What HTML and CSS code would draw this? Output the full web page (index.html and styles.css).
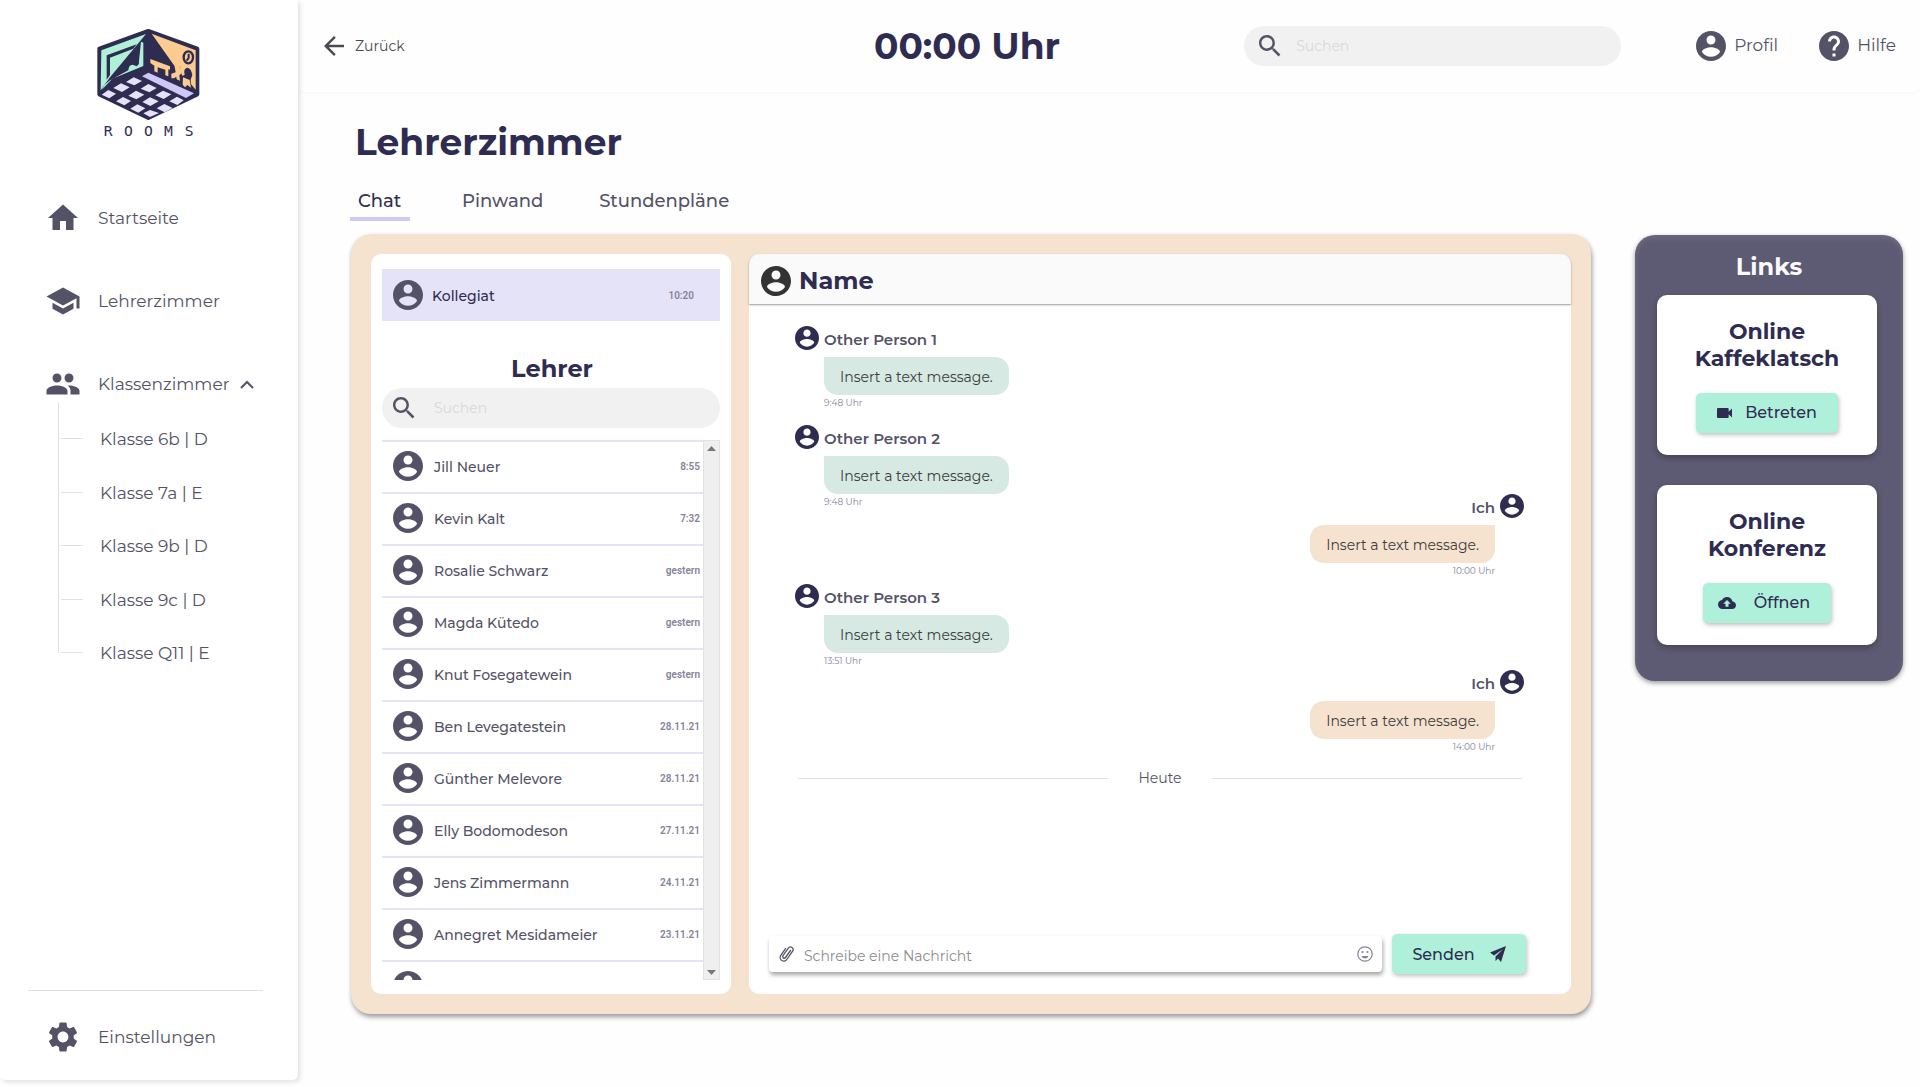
FILE: index.html
```html
<!DOCTYPE html>
<html lang="de">
<head>
<meta charset="utf-8">
<meta name="viewport" content="width=device-width, initial-scale=1">
<title>Rooms – Lehrerzimmer</title>
<link rel="stylesheet" href="styles.css">
</head>
<body>
<svg class="sprite" aria-hidden="true">
  <symbol id="account" viewBox="2 2 20 20"><path d="M12 2C6.48 2 2 6.48 2 12s4.480 10 10 10 10-4.480 10-10S17.520 2 12 2zm0 3c1.660 0 3 1.340 3 3s-1.340 3-3 3-3-1.340-3-3 1.340-3 3-3zm0 14.200c-2.500 0-4.710-1.280-6-3.220.030-1.990 4-3.080 6-3.080 1.990 0 5.970 1.090 6 3.080-1.290 1.940-3.500 3.220-6 3.220z"/></symbol>
  <symbol id="search" viewBox="3 3 18 18"><path d="M15.500 14h-.790l-.280-.270C15.410 12.590 16 11.110 16 9.500 16 5.910 13.090 3 9.500 3S3 5.910 3 9.500 5.910 16 9.500 16c1.610 0 3.090-.590 4.230-1.570l.270.280v.790l5 4.990L20.490 19l-4.990-5zm-6 0C7.010 14 5 11.990 5 9.500S7.010 5 9.500 5 14 7.010 14 9.500 11.990 14 9.500 14z"/></symbol>
</svg>
<div class="app">
  <aside class="sidebar">
    <a class="logo" href="#" aria-label="Rooms">
      <svg viewBox="0 0 420 405" width="140" height="135">
        <path d="M205 48 352 101V238L205 309 58 238V101Z" fill="#2f2c52" stroke="#2f2c52" stroke-width="12" stroke-linejoin="round"/>
        <path d="M64 106 198 57 90 187 62 226Z" fill="#aff0d8"/>
        <path d="M80 121 170 88 160 101 90 128V180L80 194Z" fill="#2f2c52"/>
        <path d="M183 80 190 83V153L97 191 64 226 74 209 90 196 145 166Q146 150 158 149L170 154 176 148Z" fill="#aff0d8"/>
        <path d="M94 187 161 106 176 90V146L171 150 158 147 146 151 144 164Z" fill="#2f2c52"/>
        <path d="M215 56 347 106V224L333 207 332 194 337 180Q333 158 321 158 309 162 314 180L306 182 300 154 283 152Z" fill="#fccb8f"/>
        <path d="M211 132 270 154V164L265 163V184L256 181V164L233 157V173L223 169V152L211 144Z" fill="#fccb8f"/>
        <path d="M283 150 300 154 306 174 298 181 300 197 290 193 289 185 282 190 274 190V176L287 172Z" fill="#fccb8f"/>
        <path d="M309 187 329 195 333 218 322 210 315 217 308 209Z" fill="#fccb8f"/>
        <ellipse cx="325" cy="127" rx="14" ry="18" fill="none" stroke="#2f2c52" stroke-width="7"/>
        <path d="M326 116V129L320 137" fill="none" stroke="#2f2c52" stroke-width="6"/>
        <path d="M205 173 342 235 318 249 186 184Z" fill="#cdc8f5"/>
        <g fill="#e5e2f8">
          <path d="M161 187 186 198 163 211 138 201ZM123 205 149 217 126 231 100 219ZM85 225 108 236 88 250 65 239Z"/>
          <path d="M205 207 230 219 208 232 182 221ZM168 227 193 239 169 253 145 242ZM129 246 153 258 133 271 108 259Z"/>
          <path d="M249 227 274 238 251 252 226 241ZM210 247 236 259 211 273 187 261ZM172 268 196 280 175 293 151 281Z"/>
          <path d="M291 245 311 256 292 270 268 259ZM253 267 278 279 254 292 230 280ZM210 285 237 294 210 306 190 295Z"/>
        </g>
        <text class="logo-name" x="71 132 192 252 314" y="364">ROOMS</text>
      </svg>
    </a>
    <nav class="nav" aria-label="Hauptnavigation">
      <a class="nav-item" href="#"><svg class="nav-icon" viewBox="0 0 24 24"><path d="M10 20v-6h4v6h5v-8h3L12 3 2 12h3v8z"/></svg><span>Startseite</span></a>
      <a class="nav-item" href="#"><svg class="nav-icon" viewBox="0 0 24 24"><path d="M5 13.180v4L12 21l7-3.820v-4L12 17l-7-3.820zM12 3 1 9l11 6 9-4.910V17h2V9L12 3z"/></svg><span>Lehrerzimmer</span></a>
      <a class="nav-item" href="#"><svg class="nav-icon" viewBox="0 0 24 24"><path d="M16 11c1.660 0 2.990-1.340 2.990-3S17.660 5 16 5c-1.660 0-3 1.340-3 3s1.340 3 3 3zm-8 0c1.660 0 2.990-1.340 2.990-3S9.660 5 8 5C6.340 5 5 6.340 5 8s1.340 3 3 3zm0 2c-2.330 0-7 1.170-7 3.500V19h14v-2.500c0-2.330-4.670-3.500-7-3.500zm8 0c-.290 0-.620.020-.970.050 1.160.840 1.970 1.970 1.970 3.450V19h6v-2.500c0-2.330-4.670-3.500-7-3.500z"/></svg><span>Klassenzimmer</span><svg class="chevron" viewBox="0 0 14 9"><path d="M1 8 7 2l6 6" fill="none" stroke="currentColor" stroke-width="2"/></svg></a>
      <ul class="tree">
        <li><a href="#">Klasse 6b | D</a></li>
        <li><a href="#">Klasse 7a | E</a></li>
        <li><a href="#">Klasse 9b | D</a></li>
        <li><a href="#">Klasse 9c | D</a></li>
        <li><a href="#">Klasse Q11 | E</a></li>
      </ul>
    </nav>
    <div class="sidebar-foot">
      <a class="nav-item" href="#"><svg class="nav-icon" viewBox="0 0 24 24"><path d="M19.140 12.940c.040-.300.060-.610.060-.940 0-.320-.020-.640-.070-.940l2.030-1.580c.180-.140.230-.410.120-.610l-1.920-3.320c-.120-.220-.370-.290-.590-.220l-2.390.960c-.500-.380-1.030-.700-1.620-.940L14.400 2.810c-.040-.240-.240-.410-.480-.410h-3.840c-.240 0-.430.170-.470.410L9.250 5.350c-.590.240-1.130.570-1.620.940l-2.390-.960c-.220-.080-.470 0-.590.220L2.740 8.870c-.120.210-.080.470.120.610l2.030 1.580c-.050.300-.090.630-.090.940s.020.640.070.940l-2.030 1.580c-.180.140-.230.410-.120.610l1.920 3.320c.120.220.370.290.590.220l2.390-.960c.500.380 1.030.700 1.620.940l.360 2.540c.050.240.240.410.480.410h3.840c.240 0 .440-.170.470-.410l.360-2.540c.590-.240 1.130-.560 1.620-.940l2.390.960c.220.080.470 0 .590-.220l1.920-3.320c.120-.220.070-.470-.120-.610l-2.010-1.580zM12 15.600c-1.980 0-3.600-1.620-3.600-3.600s1.620-3.600 3.600-3.600 3.600 1.620 3.600 3.600-1.620 3.600-3.600 3.600z"/></svg><span>Einstellungen</span></a>
    </div>
  </aside>

  <div class="page">
    <header class="topbar">
      <a class="back" href="#"><svg viewBox="4 4 16 16" width="20" height="20"><path d="M20 11H7.830l5.590-5.590L12 4l-8 8 8 8 1.410-1.410L7.830 13H20v-2z"/></svg><span>Zurück</span></a>
      <time class="clock">00:00 Uhr</time>
      <div class="tools">
        <label class="search"><svg class="search-icon"><use href="#search"/></svg><input type="search" placeholder="Suchen" aria-label="Suchen"></label>
        <a class="tool" href="#"><svg class="avatar"><use href="#account"/></svg><span>Profil</span></a>
        <a class="tool" href="#"><svg class="avatar" viewBox="2 2 20 20"><path d="M12 2C6.480 2 2 6.480 2 12s4.480 10 10 10 10-4.480 10-10S17.520 2 12 2zm1 17h-2v-2h2v2zm2.070-7.750-.900.920C13.450 12.900 13 13.500 13 15h-2v-.500c0-1.100.450-2.100 1.170-2.830l1.240-1.260c.370-.360.590-.860.590-1.410 0-1.100-.900-2-2-2s-2 .900-2 2H8c0-2.210 1.790-4 4-4s4 1.790 4 4c0 .880-.360 1.680-.930 2.250z"/></svg><span>Hilfe</span></a>
      </div>
    </header>

    <main class="content">
      <h1>Lehrerzimmer</h1>
      <nav class="tabs" aria-label="Bereiche">
        <a class="tab active" href="#">Chat</a>
        <a class="tab" href="#">Pinwand</a>
        <a class="tab" href="#">Stundenpläne</a>
      </nav>
      <div class="columns">
        <section class="messenger">
          <div class="contacts">
            <a class="contact selected" href="#"><svg class="avatar"><use href="#account"/></svg><span class="contact-name">Kollegiat</span><time>10:20</time></a>
            <h2>Lehrer</h2>
            <label class="search"><svg class="search-icon"><use href="#search"/></svg><input type="search" placeholder="Suchen" aria-label="Lehrer suchen"></label>
            <div class="contact-box">
              <ul class="contact-list">
                <li><a class="contact" href="#"><svg class="avatar"><use href="#account"/></svg><span class="contact-name">Jill Neuer</span><time>8:55</time></a></li>
                <li><a class="contact" href="#"><svg class="avatar"><use href="#account"/></svg><span class="contact-name">Kevin Kalt</span><time>7:32</time></a></li>
                <li><a class="contact" href="#"><svg class="avatar"><use href="#account"/></svg><span class="contact-name">Rosalie Schwarz</span><time>gestern</time></a></li>
                <li><a class="contact" href="#"><svg class="avatar"><use href="#account"/></svg><span class="contact-name">Magda Kütedo</span><time>gestern</time></a></li>
                <li><a class="contact" href="#"><svg class="avatar"><use href="#account"/></svg><span class="contact-name">Knut Fosegatewein</span><time>gestern</time></a></li>
                <li><a class="contact" href="#"><svg class="avatar"><use href="#account"/></svg><span class="contact-name">Ben Levegatestein</span><time>28.11.21</time></a></li>
                <li><a class="contact" href="#"><svg class="avatar"><use href="#account"/></svg><span class="contact-name">Günther Melevore</span><time>28.11.21</time></a></li>
                <li><a class="contact" href="#"><svg class="avatar"><use href="#account"/></svg><span class="contact-name">Elly Bodomodeson</span><time>27.11.21</time></a></li>
                <li><a class="contact" href="#"><svg class="avatar"><use href="#account"/></svg><span class="contact-name">Jens Zimmermann</span><time>24.11.21</time></a></li>
                <li><a class="contact" href="#"><svg class="avatar"><use href="#account"/></svg><span class="contact-name">Annegret Mesidameier</span><time>23.11.21</time></a></li>
                <li><a class="contact" href="#" aria-label="Weitere"><svg class="avatar"><use href="#account"/></svg></a></li>
              </ul>
              <div class="scrollbar" aria-hidden="true"><svg viewBox="0 0 9 5" width="9" height="5"><path d="M0 5 4.500 0 9 5z"/></svg><svg viewBox="0 0 9 5" width="9" height="5"><path d="M0 0h9L4.500 5z"/></svg></div>
            </div>
          </div>

          <div class="chat">
            <header class="chat-head"><svg class="avatar"><use href="#account"/></svg><h2>Name</h2></header>
            <div class="thread">
              <article class="message"><svg class="face"><use href="#account"/></svg><h3>Other Person 1</h3><p>Insert a text message.</p><time>9:48 Uhr</time></article>
              <article class="message"><svg class="face"><use href="#account"/></svg><h3>Other Person 2</h3><p>Insert a text message.</p><time>9:48 Uhr</time></article>
              <article class="message own"><svg class="face"><use href="#account"/></svg><h3>Ich</h3><p>Insert a text message.</p><time>10:00 Uhr</time></article>
              <article class="message"><svg class="face"><use href="#account"/></svg><h3>Other Person 3</h3><p>Insert a text message.</p><time>13:51 Uhr</time></article>
              <article class="message own"><svg class="face"><use href="#account"/></svg><h3>Ich</h3><p>Insert a text message.</p><time>14:00 Uhr</time></article>
              <div class="day"><span>Heute</span></div>
            </div>
            <form class="composer">
              <div class="field">
                <svg class="clip" viewBox="0 0 16 18"><path d="M11.500 5.500 6.500 12.500a1.500 1.500 0 0 1-2.500-1.800L9.300 3.200a2.600 2.600 0 0 1 4.300 3L7.800 14.500a3.600 3.600 0 0 1-6-4.100L6.500 3.700" fill="none" stroke="currentColor" stroke-width="1.300" stroke-linecap="round"/></svg>
                <input type="text" placeholder="Schreibe eine Nachricht" aria-label="Nachricht">
                <svg class="smiley" viewBox="0 0 16 16"><circle cx="8" cy="8" r="7.200" fill="none" stroke="currentColor" stroke-width="1.200"/><circle cx="5.500" cy="6" r="1.100"/><circle cx="10.500" cy="6" r="1.100"/><path d="M4.500 10h7Q10.500 12.600 8 12.600T4.500 10Z"/></svg>
              </div>
              <button class="btn send" type="button"><span>Senden</span><svg viewBox="0 0 16 16" width="16" height="16"><path d="M16 0 0 6.500 4 9.500 13 3 5.500 10.500V15L8 12.500 11 16z"/></svg></button>
            </form>
          </div>
        </section>

        <aside class="links">
          <h2>Links</h2>
          <div class="card">
            <h3>Online Kaffeklatsch</h3>
            <button class="btn join" type="button"><svg viewBox="3 6 18 12" width="15" height="10"><path d="M17 10.500V7c0-.550-.450-1-1-1H4c-.550 0-1 .450-1 1v10c0 .550.450 1 1 1h12c.550 0 1-.450 1-1v-3.500l4 4v-11l-4 4z"/></svg><span>Betreten</span></button>
          </div>
          <div class="card">
            <h3>Online Konferenz</h3>
            <button class="btn open" type="button"><svg viewBox="0 4 24 16" width="18" height="12"><path d="M19.350 10.040C18.670 6.590 15.640 4 12 4 9.110 4 6.600 5.640 5.350 8.040 2.340 8.360 0 10.910 0 14c0 3.310 2.690 6 6 6h13c2.760 0 5-2.240 5-5 0-2.640-2.050-4.780-4.650-4.960zM14 13v4h-4v-4H7l5-5 5 5h-3z"/></svg><span>Öffnen</span></button>
          </div>
        </aside>
      </div>
    </main>
  </div>
</div>
</body>
</html>
```
FILE: styles.css
```css
:root {
  --ink: #2f2c52;
  --muted: #545266;
  --lilac: #e5e3f8;
  --sand: #f5e3cf;
  --mint: #aff0da;
}

* { box-sizing: border-box; }

body {
  margin: 0;
  background: #fefefe;
  color: var(--muted);
  font-family: Montserrat, Inter, sans-serif;
  font-size: 16px;
}

h1, h2, h3, p, ul { margin: 0; padding: 0; }
ul { list-style: none; }
a { color: inherit; text-decoration: none; }
svg { flex: none; fill: currentColor; }
h1, h2, h3 { color: var(--ink); }
h2 { font-size: 24px; line-height: 30px; }

button, input { font: inherit; color: inherit; border: 0; }
input { flex: 1; min-width: 0; padding: 0; background: none; outline: 0; }

.sprite { position: absolute; width: 0; height: 0; }
.app { display: flex; min-height: 100vh; }

/* Sidebar */
.sidebar {
  display: flex;
  flex-direction: column;
  flex: none;
  width: 298px;
  margin-bottom: 7px;
  padding-top: 15px;
  background: #fff;
  border-radius: 0 0 5px 5px;
  box-shadow: 2px 2px 5px rgba(0, 0, 0, .12);
}
.logo { align-self: center; height: 135px; margin-left: 2px; }
.logo-name {
  font-family: "DejaVu Sans Mono", monospace;
  font-size: 44px;
  fill: var(--ink);
}
.nav { display: flex; flex-direction: column; gap: 47px; padding-top: 50px; }
.nav-item { display: flex; align-items: center; height: 36px; padding-left: 45px; font-size: 17px; }
.nav-icon { width: 36px; height: 36px; margin-right: 17px; }
.chevron { width: 14px; height: 9px; margin-left: 11px; }
.tree {
  display: grid;
  grid-template-rows: 36px repeat(4, 1fr);
  height: 250px;
  margin: -46px 0 0 58px;
  border-left: 1px solid #e2e2e6;
}
.tree li { display: flex; align-items: flex-end; }
.tree li::before { content: ""; width: 22px; margin: 0 17px 0 2px; border-bottom: 1px solid #e2e2e6; }
.tree a { height: 0; line-height: 0; font-size: 17px; }
.sidebar-foot { margin: auto 35px 0 28px; padding: 28px 0 25px; border-top: 1px solid #e2e2e6; }
.sidebar-foot .nav-item { padding-left: 17px; }

/* Top bar */
.page { flex: 1; min-width: 0; }
.topbar {
  display: grid;
  grid-template-columns: 1fr auto auto;
  align-items: center;
  height: 92px;
  padding: 0 24px 0 26px;
  border-radius: 0 0 5px 5px;
  box-shadow: 0 1px 2px rgba(0, 0, 0, .03);
}
.back { display: flex; align-items: center; gap: 11px; font-size: 14px; color: #4b4a50; }
.clock { padding-right: 184px; font-size: 36px; font-weight: 700; color: var(--ink); }
.tools { display: flex; align-items: center; }
.tools .search { width: 377px; margin-right: 75px; }
.tool { display: flex; align-items: center; gap: 8px; font-size: 17px; }
.tool span { padding-bottom: 2px; }
.tool + .tool { margin-left: 41px; }
.avatar { width: 30px; height: 30px; }

.search {
  display: flex;
  align-items: center;
  gap: 19px;
  height: 40px;
  padding: 0 15px 0 11px;
  background: #f1f1f1;
  border-radius: 20px;
}
.search input { font-size: 14px; }
.search input::placeholder { color: #d9d9d9; opacity: 1; }
.search-icon { width: 22px; height: 22px; }
.tools .search { padding-left: 15px; gap: 15px; }

/* Page body */
.content { padding: 28px 17px 73px 53px; }
h1 { padding-left: 4px; font-size: 36px; line-height: 44px; }
.tabs { display: flex; align-items: flex-start; gap: 40px; height: 66px; margin-top: 4px; padding-top: 20px; }
.tab { height: 33px; padding: 0 8px; font-size: 18px; font-weight: 500; line-height: 26px; }
.tab.active { width: 60px; margin: 0 4px 0 -1px; border-bottom: 4px solid #cfcaf6; color: var(--ink); }
.columns { display: flex; align-items: flex-start; gap: 44px; }

/* Messenger */
.messenger {
  display: flex;
  flex: 1;
  gap: 18px;
  min-width: 0;
  padding: 20px;
  background: var(--sand);
  border-radius: 20px;
  box-shadow: 1px 3px 5px rgba(0, 0, 0, .4);
}
.contacts { flex: none; width: 360px; padding: 15px 11px 14px; background: #fff; border-radius: 10px; }
.contacts h2 { margin: 33px 0 4px; padding-left: 2px; text-align: center; }
.contact { display: flex; align-items: center; height: 52px; padding: 0 3px 0 11px; color: var(--muted); font-size: 14px; font-weight: 500; }
.contact-name { flex: 1; padding: 2px 0 0 11px; }
.contact time { padding-top: 2px; font: 600 10px/12px Roboto, sans-serif; color: #85839a; }
.contact.selected { padding-right: 26px; background: var(--lilac); }
.contact.selected .contact-name { padding-left: 9px; color: var(--ink); }
.contact-box { display: flex; height: 540px; margin-top: 12px; overflow: hidden; }
.contact-list { flex: 1; }
.contact-list .contact { padding-bottom: 2px; border-top: 2px solid var(--lilac); }
.scrollbar {
  display: flex;
  flex-direction: column;
  align-items: center;
  justify-content: space-between;
  width: 17px;
  padding: 5px 0 4px;
  background: #efefef;
  border: 1px solid #e2e2e2;
  color: #787878;
}

/* Conversation */
.chat { display: flex; flex: 1; flex-direction: column; min-width: 0; background: #fff; border-radius: 10px; }
.chat-head {
  display: flex;
  align-items: center;
  gap: 8px;
  height: 50px;
  padding: 4px 12px 0;
  background: #fafafa;
  border-radius: 10px 10px 0 0;
  box-shadow: 0 1px 2px rgba(0, 0, 0, .4);
}
.chat-head .avatar { color: #333; }
.thread {
  display: grid;
  flex: 1;
  grid-template-rows: 99px 69px 90px 86px 98px;
  align-content: start;
  padding: 22px 47px 0 46px;
}
.message {
  display: grid;
  grid-template-columns: 24px auto;
  grid-template-rows: 24px 38px 16px;
  row-gap: 7px;
  column-gap: 5px;
  justify-content: start;
  justify-items: start;
}
.face { width: 24px; height: 24px; color: var(--ink); }
.message h3 { padding-top: 4px; font-size: 15px; line-height: 20px; font-weight: 600; color: var(--muted); }
.message p {
  grid-column: 2;
  padding: 2px 16px 0;
  border-radius: 0 14px 14px;
  background: #d6eae3;
  color: #3c3c3c;
  font-size: 14px;
  line-height: 36px;
}
.message time { grid-column: 2; margin-top: -6px; font-size: 9px; line-height: 14px; color: #85839a; }
.own { grid-template-columns: auto 24px; justify-content: end; justify-items: end; }
.own .face { grid-area: 1 / 2; }
.own h3, .own p, .own time { grid-column: 1; }
.own h3 { grid-row: 1; }
.own p { border-radius: 14px 0 14px 14px; background: var(--sand); }
.day { display: flex; align-items: center; gap: 30px; height: 20px; padding: 0 2px 0 3px; font-size: 14px; }
.day::before, .day::after { content: ""; flex: 1; border-top: 1px solid #e2e2e6; }

.composer { display: flex; align-items: center; gap: 10px; padding: 0 45px 20px 20px; }
.field {
  display: flex;
  flex: 1;
  align-items: center;
  gap: 9px;
  min-width: 0;
  height: 36px;
  padding: 0 9px 0 10px;
  background: #fff;
  border-radius: 4px;
  box-shadow: 1px 3px 4px rgba(0, 0, 0, .35);
}
.field input { padding-top: 3px; font-size: 14px; }
.field input::placeholder { color: #8c8c8c; opacity: 1; }
.clip { width: 16px; height: 18px; }
.smiley { width: 16px; height: 16px; color: #85839a; }

.btn {
  display: flex;
  align-items: center;
  justify-content: center;
  height: 40px;
  padding: 0;
  background: var(--mint);
  border-radius: 5px;
  box-shadow: 1px 2px 4px rgba(0, 0, 0, .25);
  color: var(--ink);
  font-size: 16px;
  font-weight: 500;
}
.send { gap: 15px; width: 134px; }

/* Quick links */
.links {
  flex: none;
  width: 268px;
  margin-top: 1px;
  padding: 17px 26px 36px 22px;
  background: #5d5a73;
  border-radius: 20px;
  box-shadow: 0 2px 5px rgba(0, 0, 0, .4), inset 0 3px 6px rgba(255, 255, 255, .1);
}
.links h2 { margin-bottom: 13px; padding-left: 4px; text-align: center; color: #fafafa; }
.card {
  display: flex;
  flex-direction: column;
  align-items: center;
  justify-content: space-between;
  width: 220px;
  height: 160px;
  padding: 23px 30px 22px;
  background: #fff;
  border-radius: 10px;
  box-shadow: 0 3px 6px rgba(0, 0, 0, .25);
}
.card + .card { margin-top: 30px; }
.card h3 { font-size: 22px; line-height: 27px; text-align: center; }
.card .btn span { padding-bottom: 2px; }
.join { gap: 13px; width: 142px; }
.open { gap: 18px; width: 128px; padding-right: 6px; }
```
